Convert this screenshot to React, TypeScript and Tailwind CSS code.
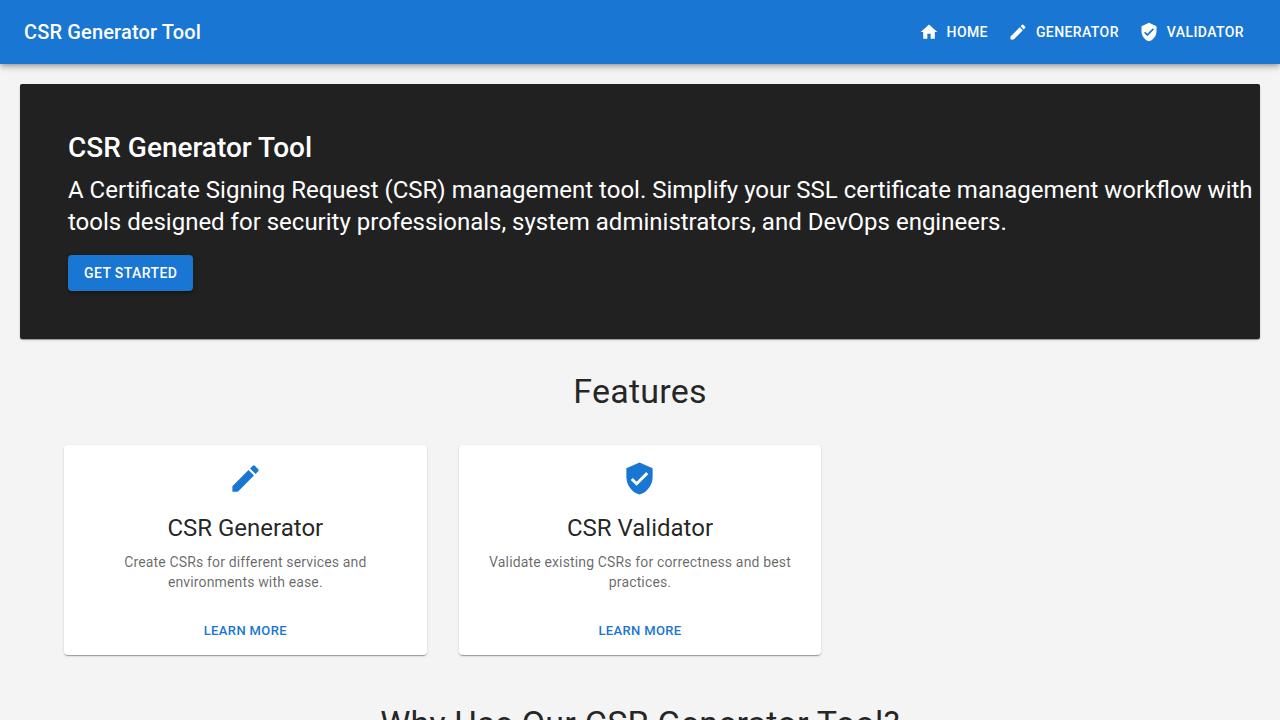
const ICONS = {
  home: 'M10 20v-6h4v6h5v-8h3L12 3 2 12h3v8z',
  pencil:
    'M3 17.25V21h3.75L17.81 9.94l-3.75-3.75zM20.71 7.04c.39-.39.39-1.02 0-1.41l-2.34-2.34a.996.996 0 0 0-1.41 0l-1.83 1.83 3.75 3.75z',
  shield:
    'M12 1 3 5v6c0 5.55 3.84 10.74 9 12 5.16-1.26 9-6.45 9-12V5zm-2 16-4-4 1.41-1.41L10 14.17l6.59-6.59L18 9z',
};

function Icon({ path, className }: { path: string; className: string }) {
  return (
    <svg viewBox="0 0 24 24" fill="currentColor" aria-hidden="true" className={className}>
      <path d={path} />
    </svg>
  );
}

function NavButton({ icon, label }: { icon: string; label: string }) {
  return (
    <a className="flex items-center gap-2 px-2 py-1.5 text-[14px] leading-[24.5px] font-medium tracking-[0.4px] uppercase">
      <Icon path={icon} className="-ml-1 size-5" />
      {label}
    </a>
  );
}

function FeatureCard({ icon, title, text }: { icon: string; title: string; text: string }) {
  return (
    <article className="flex w-[362.66px] flex-col overflow-hidden rounded bg-white shadow-[0px_2px_1px_-1px_rgba(0,0,0,0.2),0px_1px_1px_0px_rgba(0,0,0,0.14),0px_1px_3px_0px_rgba(0,0,0,0.12)]">
      <div className="flex grow flex-col items-center p-4 text-center">
        <Icon path={icon} className="mb-4 size-[35px] text-[#1976d2]" />
        <h3 className="mb-[0.35em] text-2xl leading-[1.334]">{title}</h3>
        <p className="text-[14px] leading-[1.43] tracking-[0.15px] text-black/60">{text}</p>
      </div>
      <div className="flex justify-center p-2">
        <a className="px-[5px] py-1 text-[13px] leading-[22.75px] font-medium tracking-[0.37px] text-[#1976d2] uppercase">
          Learn More
        </a>
      </div>
    </article>
  );
}

export default function App() {
  return (
    <div className="h-screen overflow-hidden bg-[#f4f4f4] font-['Roboto',sans-serif] text-black/87 antialiased">
      <header className="relative flex h-16 items-center justify-between bg-[#1976d2] pr-7 pl-6 text-white shadow-[0px_2px_4px_-1px_rgba(0,0,0,0.2),0px_4px_5px_0px_rgba(0,0,0,0.14),0px_1px_10px_0px_rgba(0,0,0,0.12)]">
        <div className="text-xl leading-[1.6] font-medium tracking-[0.15px]">CSR Generator Tool</div>
        <nav className="flex gap-2">
          <NavButton icon={ICONS.home} label="Home" />
          <NavButton icon={ICONS.pencil} label="Generator" />
          <NavButton icon={ICONS.shield} label="Validator" />
        </nav>
      </header>
      <main className="p-5">
        <section className="h-[255px] rounded-[2px] bg-[#212121] py-12 pl-12 text-white shadow-[0px_2px_1px_-1px_rgba(0,0,0,0.2),0px_1px_1px_0px_rgba(0,0,0,0.14),0px_1px_3px_0px_rgba(0,0,0,0.12)]">
          <h1 className="text-[28px] leading-[32px] font-medium">CSR Generator Tool</h1>
          <p className="mt-[10px] text-2xl leading-8">
            A Certificate Signing Request (CSR) management tool. Simplify your SSL certificate management workflow with
            tools designed for security professionals, system administrators, and DevOps engineers.
          </p>
          <button className="mt-[17px] block rounded bg-[#1976d2] px-4 py-1.5 text-[14px] leading-6 font-medium tracking-[0.4px] uppercase shadow-[0px_3px_1px_-2px_rgba(0,0,0,0.2),0px_2px_2px_0px_rgba(0,0,0,0.14),0px_1px_5px_0px_rgba(0,0,0,0.12)]">
            Get Started
          </button>
        </section>
        <h2 className="mt-8 text-center text-[34px] leading-[1.235] tracking-[0.25px]">Features</h2>
        <section className="mt-8 flex h-[210px] gap-8 px-11">
          <FeatureCard
            icon={ICONS.pencil}
            title="CSR Generator"
            text="Create CSRs for different services and environments with ease."
          />
          <FeatureCard
            icon={ICONS.shield}
            title="CSR Validator"
            text="Validate existing CSRs for correctness and best practices."
          />
        </section>
        <h2 className="mt-12 text-center text-[34px] leading-[1.235] tracking-[0.25px]">
          Why Use Our CSR Generator Tool?
        </h2>
      </main>
    </div>
  );
}
